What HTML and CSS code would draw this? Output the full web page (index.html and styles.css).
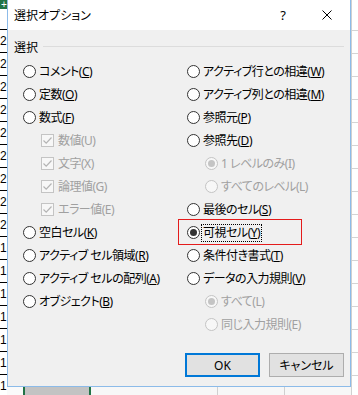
FILE: index.html
```html
<!DOCTYPE html>
<html lang="ja">
<head>
<meta charset="utf-8">
<title>選択オプション</title>
<link rel="stylesheet" href="styles.css">
</head>
<body>
<div class="screen">
  <div class="rowhdr">
    <div class="corner">+</div>
    <div class="gap"></div>
    <div class="r">2</div><div class="r">2</div><div class="r">2</div><div class="r">2</div>
    <div class="r">2</div><div class="r">2</div><div class="r">2</div><div class="r">2</div>
    <div class="r">2</div><div class="r">1</div><div class="r">1</div><div class="r">1</div>
    <div class="r">1</div><div class="r">1</div><div class="r">1</div><div class="r">1</div>
  </div>
  <div class="mid">
    <div class="dialog">
      <div class="titlebar">
        <span class="title">選択オプション</span>
        <span class="tbtn help">?</span>
        <span class="tbtn close"><svg width="10" height="10" viewBox="0 0 10 10"><path d="M0.5 0.5L9.5 9.5M9.5 0.5L0.5 9.5" stroke="#000" stroke-width="1" fill="none"/></svg></span>
      </div>
      <div class="body">
        <div class="grouphead"><span class="glabel">選択</span><span class="rule"></span></div>
        <div class="cols">
          <div class="col">
            <div class="opt"><span class="radio"></span><span class="lbl">コメント(<u>C</u>)</span></div>
            <div class="opt"><span class="radio"></span><span class="lbl">定数(<u>O</u>)</span></div>
            <div class="opt"><span class="radio"></span><span class="lbl">数式(<u>F</u>)</span></div>
            <div class="opt sub dis"><span class="check"><svg width="11" height="11" viewBox="0 0 11 11"><path d="M1.5 5.5L4.2 8.2L9.5 2.5" stroke="#b4b4b4" stroke-width="1.2" fill="none"/></svg></span><span class="lbl">数値(U)</span></div>
            <div class="opt sub dis"><span class="check"><svg width="11" height="11" viewBox="0 0 11 11"><path d="M1.5 5.5L4.2 8.2L9.5 2.5" stroke="#b4b4b4" stroke-width="1.2" fill="none"/></svg></span><span class="lbl">文字(X)</span></div>
            <div class="opt sub dis"><span class="check"><svg width="11" height="11" viewBox="0 0 11 11"><path d="M1.5 5.5L4.2 8.2L9.5 2.5" stroke="#b4b4b4" stroke-width="1.2" fill="none"/></svg></span><span class="lbl">論理値(G)</span></div>
            <div class="opt sub dis"><span class="check"><svg width="11" height="11" viewBox="0 0 11 11"><path d="M1.5 5.5L4.2 8.2L9.5 2.5" stroke="#b4b4b4" stroke-width="1.2" fill="none"/></svg></span><span class="lbl">エラー値(E)</span></div>
            <div class="opt"><span class="radio"></span><span class="lbl">空白セル(<u>K</u>)</span></div>
            <div class="opt"><span class="radio"></span><span class="lbl">アクティブ セル領域(<u>R</u>)</span></div>
            <div class="opt"><span class="radio"></span><span class="lbl">アクティブ セルの配列(<u>A</u>)</span></div>
            <div class="opt"><span class="radio"></span><span class="lbl">オブジェクト(<u>B</u>)</span></div>
          </div>
          <div class="col">
            <div class="opt"><span class="radio"></span><span class="lbl">アクティブ行との相違(<u>W</u>)</span></div>
            <div class="opt"><span class="radio"></span><span class="lbl">アクティブ列との相違(<u>M</u>)</span></div>
            <div class="opt"><span class="radio"></span><span class="lbl">参照元(<u>P</u>)</span></div>
            <div class="opt"><span class="radio"></span><span class="lbl">参照先(<u>D</u>)</span></div>
            <div class="opt sub dis"><span class="radio on"></span><span class="lbl">1 レベルのみ(I)</span></div>
            <div class="opt sub dis"><span class="radio"></span><span class="lbl">すべてのレベル(L)</span></div>
            <div class="opt"><span class="radio"></span><span class="lbl">最後のセル(<u>S</u>)</span></div>
            <div class="opt"><span class="radio on"></span><span class="lbl focus">可視セル(<u>Y</u>)</span></div>
            <div class="opt"><span class="radio"></span><span class="lbl">条件付き書式(<u>T</u>)</span></div>
            <div class="opt"><span class="radio"></span><span class="lbl">データの入力規則(<u>V</u>)</span></div>
            <div class="opt sub dis"><span class="radio on"></span><span class="lbl">すべて(L)</span></div>
            <div class="opt sub dis"><span class="radio"></span><span class="lbl">同じ入力規則(E)</span></div>
          </div>
        </div>
        <div class="buttons">
          <div class="btn def">OK</div>
          <div class="btn">キャンセル</div>
        </div>
      </div>
      <div class="mark"></div>
    </div>
    <div class="bot">
      <span class="b1"></span><span class="bg"></span><span class="b2"></span><span class="bg"></span><span class="b3"></span><span class="bl"></span><span class="b4"></span><span class="bl"></span><span class="b5"></span>
    </div>
  </div>
  <div class="gridr">
    <div class="g0"></div>
    <div class="g"></div><div class="g"></div><div class="g"></div><div class="g"></div>
    <div class="g"></div><div class="g"></div><div class="g"></div><div class="g"></div>
    <div class="g"></div><div class="g"></div><div class="g"></div><div class="g"></div>
    <div class="g"></div><div class="g"></div><div class="g"></div><div class="g"></div>
  </div>
</div>
</body>
</html>
```
FILE: styles.css
```css
* { box-sizing: border-box; }
html, body { margin: 0; padding: 0; }
body {
  width: 358px;
  height: 395px;
  overflow: hidden;
  background: #fff;
  font-family: "Noto Sans", "Noto Sans CJK JP", sans-serif;
  font-size: 12px;
  color: #000;
}
.screen { display: flex; width: 358px; height: 395px; }

/* left row header strip */
.rowhdr {
  width: 7px;
  flex: none;
  display: flex;
  flex-direction: column;
  overflow: hidden;
  background: #fff;
}
.rowhdr .corner {
  height: 9px;
  flex: none;
  background: #217346;
  color: #fff;
  font: 10px/9px "Liberation Sans", sans-serif;
  padding-left: 1px;
}
.rowhdr .gap { height: 21px; flex: none; border-bottom: 1px solid #000; }
.rowhdr .r {
  height: 23px;
  flex: none;
  border-bottom: 1px solid #000;
  font: 12px/22px "Liberation Sans", sans-serif;
  color: #000;
}

/* middle column */
.mid { width: 344px; flex: none; display: flex; flex-direction: column; }
.dialog {
  height: 387px;
  flex: none;
  position: relative;
  display: flex;
  flex-direction: column;
  background: #f0f0f0;
  border: 1px solid #8cbbe9;
  border-top: none;
}
.titlebar {
  height: 30px;
  flex: none;
  display: flex;
  align-items: center;
  background: #fff;
}
.title { flex: 1; padding-left: 6px; font-size: 12px; font-feature-settings: "palt"; }
.tbtn { width: 46px; height: 30px; display: flex; align-items: center; justify-content: center; }
.help { font: 13px/1 "Noto Sans", sans-serif; padding-left: 4px; }

.body { flex: 1; padding: 10px 6px 0 6px; }
.grouphead { height: 16px; display: flex; align-items: center; gap: 5px; }
.glabel { line-height: 16px; }
.rule { flex: 1; height: 1px; background: #dcdcdc; margin-top: -3px; }

.cols {
  display: grid;
  grid-template-columns: 164px 1fr;
  margin-top: 4px;
  padding-left: 9px;
}
.opt { height: 23px; display: flex; align-items: center; gap: 3px; }
.opt.sub { padding-left: 18px; }
.lbl { white-space: nowrap; line-height: 14px; font-feature-settings: "palt"; letter-spacing: -0.5px; }
.lbl u { text-underline-offset: 1px; }
.dis .lbl { color: #a0a0a0; }
.lbl.focus { outline: 1px dotted #000; outline-offset: 1px; }

.radio {
  width: 13px;
  height: 13px;
  flex: none;
  position: relative;
  border: 1px solid #333;
  border-radius: 50%;
  background: #fff;
}
.radio.on::after {
  content: "";
  position: absolute;
  left: 2px;
  top: 2px;
  width: 7px;
  height: 7px;
  border-radius: 50%;
  background: #333;
}
.dis .radio { border-color: #c4c4c4; background: #f7f7f7; }
.dis .radio.on::after { background: #c4c4c4; }
.check {
  width: 13px;
  height: 13px;
  flex: none;
  border: 1px solid #c4c4c4;
  background: #f7f7f7;
  display: flex;
  align-items: center;
  justify-content: center;
  margin-right: 1px;
}

.buttons {
  display: flex;
  justify-content: flex-end;
  gap: 9px;
  margin-top: 17px;
}
.btn {
  width: 75px;
  height: 24px;
  display: flex;
  align-items: center;
  justify-content: center;
  background: #e1e1e1;
  border: 1px solid #adadad;
  font-size: 12px;
  font-feature-settings: "palt";
}
.btn.def { border: 2px solid #0078d7; }

/* red annotation box drawn over the dialog */
.mark {
  position: absolute;
  left: 170px;
  top: 219px;
  width: 124px;
  height: 26px;
  border: 1px solid #e41b1b;
  pointer-events: none;
}

/* bottom strip under dialog */
.bot { height: 8px; flex: none; display: flex; background: #f3f3f3; }
.bot span { height: 8px; flex: none; display: block; }
.b1 { width: 16px; background: #fafafa; }
.bg { width: 2px; background: #217346; }
.b2 { width: 64px; background: #c3c3c3; }
.b3 { width: 126px; background: #f7f7f7; }
.bl { width: 1px; background: #d0d0d0; }
.b4 { width: 66px; background: #f7f7f7; }
.b5 { width: 67px; background: #f7f7f7; }

/* right grid strip */
.gridr {
  width: 7px;
  flex: none;
  display: flex;
  flex-direction: column;
  border-left: 1px solid #d0d0d0;
  background: #fff;
  overflow: hidden;
}
.gridr .g0 { height: 31px; flex: none; border-bottom: 1px solid #d4d4d4; }
.gridr .g { height: 23px; flex: none; border-bottom: 1px solid #d4d4d4; }
```
